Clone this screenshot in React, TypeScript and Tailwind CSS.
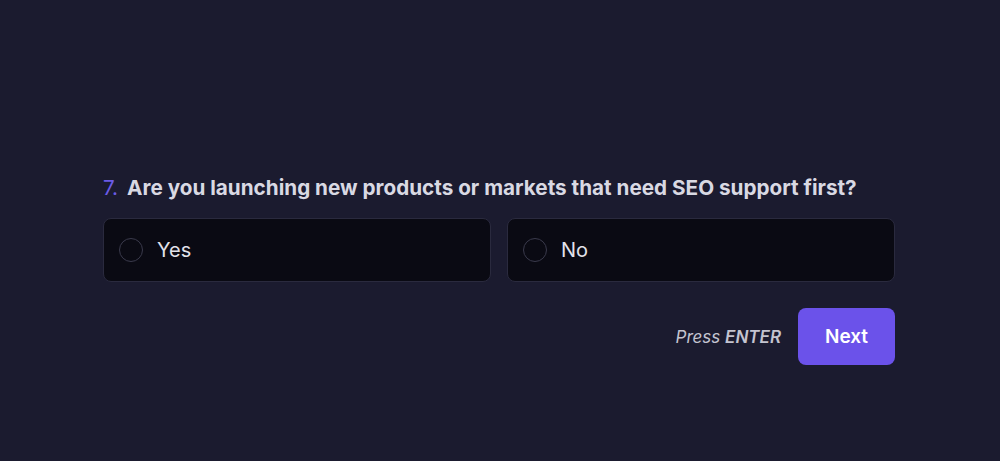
import React, { useState } from "react";

export default function App() {
  const [sel, setSel] = useState<string | null>(null);
  const options = ["Yes", "No"];
  return (
    <div
      className="w-[1000px] h-[461px] bg-[#1b1b2f] overflow-hidden"
      style={{ fontFamily: "Inter, 'Noto Sans', sans-serif" }}
    >
      <div className="w-[792px] ml-[103px] pt-[174px]">
        <div className="flex items-center gap-[9px] text-[20.7px] leading-[28px] mb-[16px]">
          <span className="text-[#6b5be6] font-normal">7.</span>
          <span className="text-[#d9d9e3] font-bold">
            Are you launching new products or markets that need SEO support first?
          </span>
        </div>
        <div className="grid grid-cols-2 gap-[16px]">
          {options.map((o) => (
            <button
              key={o}
              onClick={() => setSel(o)}
              className="h-[64px] flex items-center gap-[14px] px-[15px] rounded-[8px] bg-[#0a0a13] border border-[#2a2a3e] text-left"
            >
              <span className="w-[24px] h-[24px] rounded-full border border-[#3a3a4c] shrink-0" />
              <span className="text-[20px] text-[#e2e2ea] font-normal">{o}</span>
            </button>
          ))}
        </div>
        <div className="flex items-center justify-end gap-[17px] mt-[26px]">
          <span className="text-[17px] italic text-[#c4c4d0] pt-[2px]">
            Press <span className="font-semibold">ENTER</span>
          </span>
          <button className="w-[97px] h-[57px] rounded-[8px] bg-[#6b52ea] text-white text-[19px] font-semibold pt-[1px]">
            Next
          </button>
        </div>
      </div>
    </div>
  );
}
